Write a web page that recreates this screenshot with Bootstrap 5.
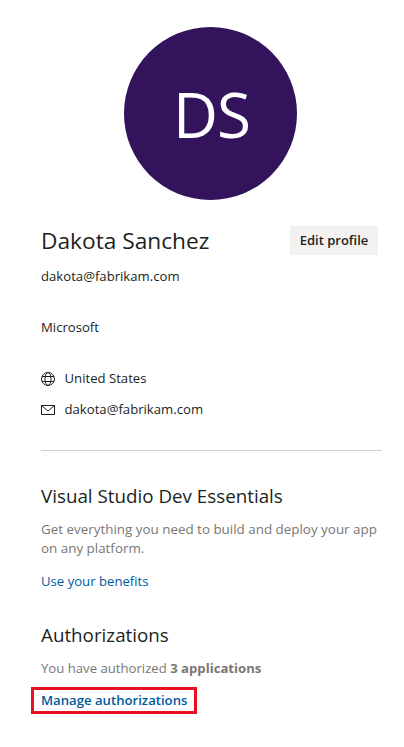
<!DOCTYPE html>
<html lang="en">
<head>
<meta charset="utf-8">
<title>Profile</title>
<link href="https://cdn.jsdelivr.net/npm/bootstrap@5.3.0/dist/css/bootstrap.min.css" rel="stylesheet">
<style>
html,body{height:100%;overflow:hidden}
body{background:#fff;color:#201f1e;font-family:"Open Sans","Noto Sans","Liberation Sans",sans-serif;font-size:13.15px;line-height:19px}
.page-wrap{padding:27px 22px 0 41px}
.avatar-disc{width:173px;height:173px;border-radius:50%;background:#33135c;color:#fff;font-size:62px;line-height:1;margin-left:83px;padding-left:2px;letter-spacing:-1px}
.profile-head{margin-top:26px;height:29px}
.profile-name{font-size:22.7px;line-height:29px;font-weight:400;margin:0}
.edit-btn{background:#f3f2f1;color:#201f1e;border:0;border-radius:0;font-size:13px;font-weight:600;padding:0;width:88px;height:29px;margin-right:4px;line-height:29px}
.info-line{height:19px}
.info-ico{width:16px;height:16px;flex:none;margin-left:-.5px}
.rule-line{height:1px;background:#d2d0ce;margin:31px 0 0;}
.sect-title{font-size:18.8px;line-height:26px;font-weight:400;margin:0}
.muted-text{color:#797775}
.para-wide{font-size:13.4px}
.ms-link{color:#005a9e;text-decoration:none}
.mark-box{border:3px solid #e81123;margin-left:-10px;padding:0 7px;width:166px;height:27px;line-height:21px;white-space:nowrap}
.mark-box a{font-weight:600;color:#005a9e}
.gap-first{margin-top:12px}
.gap-block{margin-top:32px}
.gap-item{margin-top:12px}
.title-a{margin-top:32px}
.para-a{margin-top:11px}
.link-a{margin-top:14px}
.title-b{margin-top:31px}
.para-b{margin-top:11px}
.box-b{margin-top:9px}
</style>
</head>
<body>
<main class="page-wrap">
  <div class="avatar-disc d-flex align-items-center justify-content-center">DS</div>
  <div class="profile-head d-flex justify-content-between align-items-center">
    <h1 class="profile-name">Dakota Sanchez</h1>
    <button type="button" class="btn edit-btn">Edit profile</button>
  </div>
  <div class="info-line gap-first">dakota@fabrikam.com</div>
  <div class="info-line gap-block">Microsoft</div>
  <div class="info-line d-flex align-items-center gap-2 gap-block">
    <svg class="info-ico" viewBox="0 0 16 16" fill="none" stroke="#201f1e" stroke-width="1"><circle cx="7" cy="8" r="6.5"/><ellipse cx="7" cy="8" rx="3" ry="6.5"/><path d="M1 5.5h12M1 10.5h12"/></svg>
    <span>United States</span>
  </div>
  <div class="info-line d-flex align-items-center gap-2 gap-item">
    <svg class="info-ico" viewBox="0 0 16 16" fill="none" stroke="#201f1e" stroke-width="1"><path d="M.5 3.5h13v9H.5zM.5 3.5 7 9l6.5-5.5"/></svg>
    <span>dakota@fabrikam.com</span>
  </div>
  <div class="rule-line"></div>
  <h2 class="sect-title title-a">Visual Studio Dev Essentials</h2>
  <p class="muted-text para-wide mb-0 para-a">Get everything you need to build and deploy your app on any platform.</p>
  <div class="link-a"><a class="ms-link" href="#">Use your benefits</a></div>
  <h2 class="sect-title title-b">Authorizations</h2>
  <p class="muted-text mb-0 para-b">You have authorized <strong>3 applications</strong></p>
  <div class="mark-box box-b"><a class="ms-link" href="#">Manage authorizations</a></div>
</main>
<script src="https://cdn.jsdelivr.net/npm/bootstrap@5.3.0/dist/js/bootstrap.bundle.min.js"></script>
</body>
</html>
